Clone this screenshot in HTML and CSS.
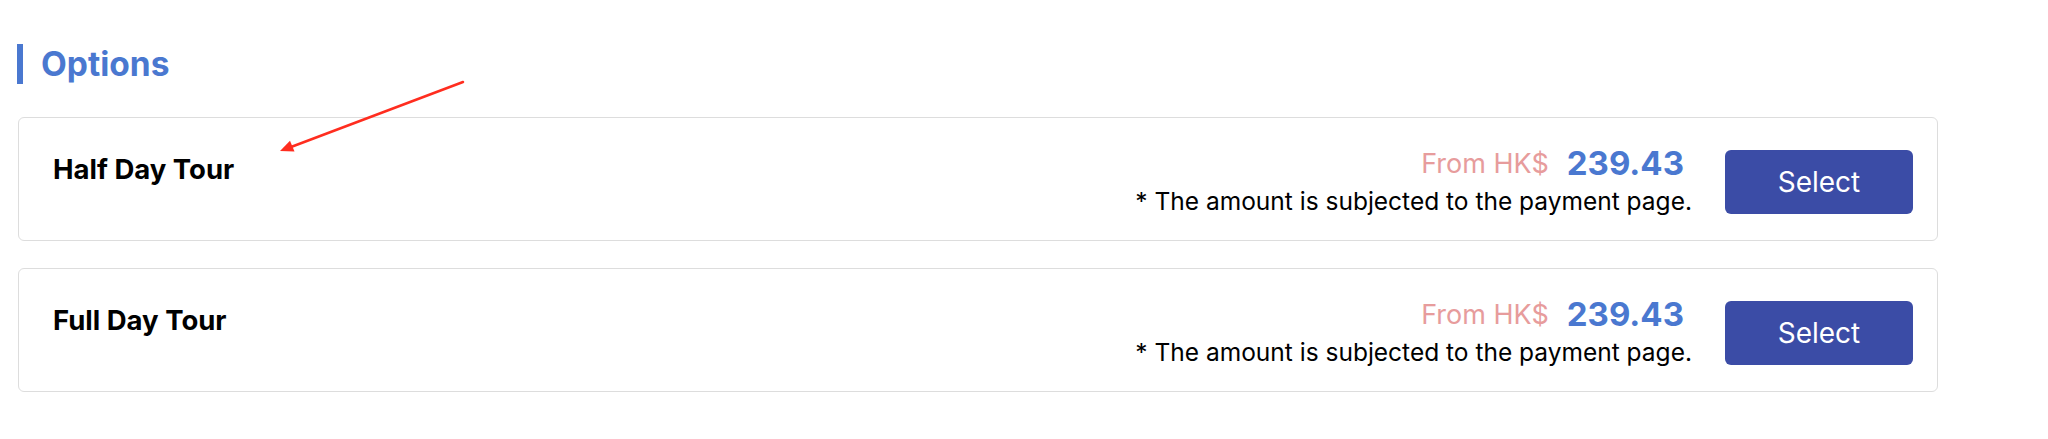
FILE: index.html
```html
<!DOCTYPE html>
<html lang="en">
<head>
<meta charset="utf-8">
<title>Options</title>
<link rel="stylesheet" href="styles.css">
</head>
<body>
<div class="page">
  <h2 class="section-title">Options</h2>
  <div class="options">
    <div class="option-card">
      <div class="option-name">Half Day Tour</div>
      <div class="option-side">
        <div class="price-block">
          <div class="price-row"><span class="price-from">From HK$</span><span class="price-amount">239.43</span></div>
          <div class="price-note">* The amount is subjected to the payment page.</div>
        </div>
        <button class="select-btn" type="button">Select</button>
      </div>
    </div>
    <div class="option-card">
      <div class="option-name">Full Day Tour</div>
      <div class="option-side">
        <div class="price-block">
          <div class="price-row"><span class="price-from">From HK$</span><span class="price-amount">239.43</span></div>
          <div class="price-note">* The amount is subjected to the payment page.</div>
        </div>
        <button class="select-btn" type="button">Select</button>
      </div>
    </div>
  </div>
  <svg class="annotation-arrow" width="500" height="200" viewBox="0 0 500 200" aria-hidden="true">
    <line x1="463" y1="82" x2="291" y2="147" stroke="#ff2d1f" stroke-width="2.5" stroke-linecap="round"/>
    <polygon points="280,151 294.5,151.5 290,140.8" fill="#ff2d1f"/>
  </svg>
</div>
</body>
</html>
```
FILE: styles.css
```css
html, body {
  margin: 0;
  padding: 0;
  background: #ffffff;
}

body {
  font-family: Inter, "Noto Sans", "Liberation Sans", sans-serif;
  color: #000000;
}

.page {
  position: relative;
  width: 1920px;
  padding: 44px 0 0 18px;
}

.section-title {
  margin: 0 0 33px -1px;
  height: 40px;
  border-left: 6px solid #4a78d0;
  padding-left: 18px;
  font-size: 33.5px;
  line-height: 40px;
  font-weight: 700;
  color: #4a78d0;
}

.options {
  display: flex;
  flex-direction: column;
  gap: 27px;
}

.option-card {
  box-sizing: border-box;
  height: 124px;
  border: 1px solid #dddddd;
  border-radius: 6px;
  padding: 0 24px 0 34px;
  display: flex;
  justify-content: space-between;
  align-items: stretch;
}

.option-name {
  margin-top: 35px;
  font-size: 27.5px;
  line-height: 32px;
  font-weight: 700;
}

.option-side {
  display: flex;
  align-items: center;
  gap: 33px;
  padding-top: 6px;
}

.price-block {
  display: flex;
  flex-direction: column;
  align-items: flex-end;
}

.price-row {
  display: flex;
  align-items: center;
  gap: 18px;
  height: 38px;
  margin-right: 8px;
}

.price-from {
  font-size: 27px;
  font-weight: 400;
  color: #e79c9c;
}

.price-amount {
  font-size: 33px;
  font-weight: 700;
  color: #4a78d0;
}

.price-note {
  font-size: 24.5px;
  line-height: 38px;
  color: #000000;
}

.select-btn {
  width: 188px;
  height: 64px;
  border: none;
  border-radius: 6px;
  background: #3b4ca6;
  color: #ffffff;
  font-family: inherit;
  font-size: 28px;
  font-weight: 400;
  cursor: pointer;
}

.annotation-arrow {
  position: absolute;
  left: 0;
  top: 0;
  pointer-events: none;
}
```
